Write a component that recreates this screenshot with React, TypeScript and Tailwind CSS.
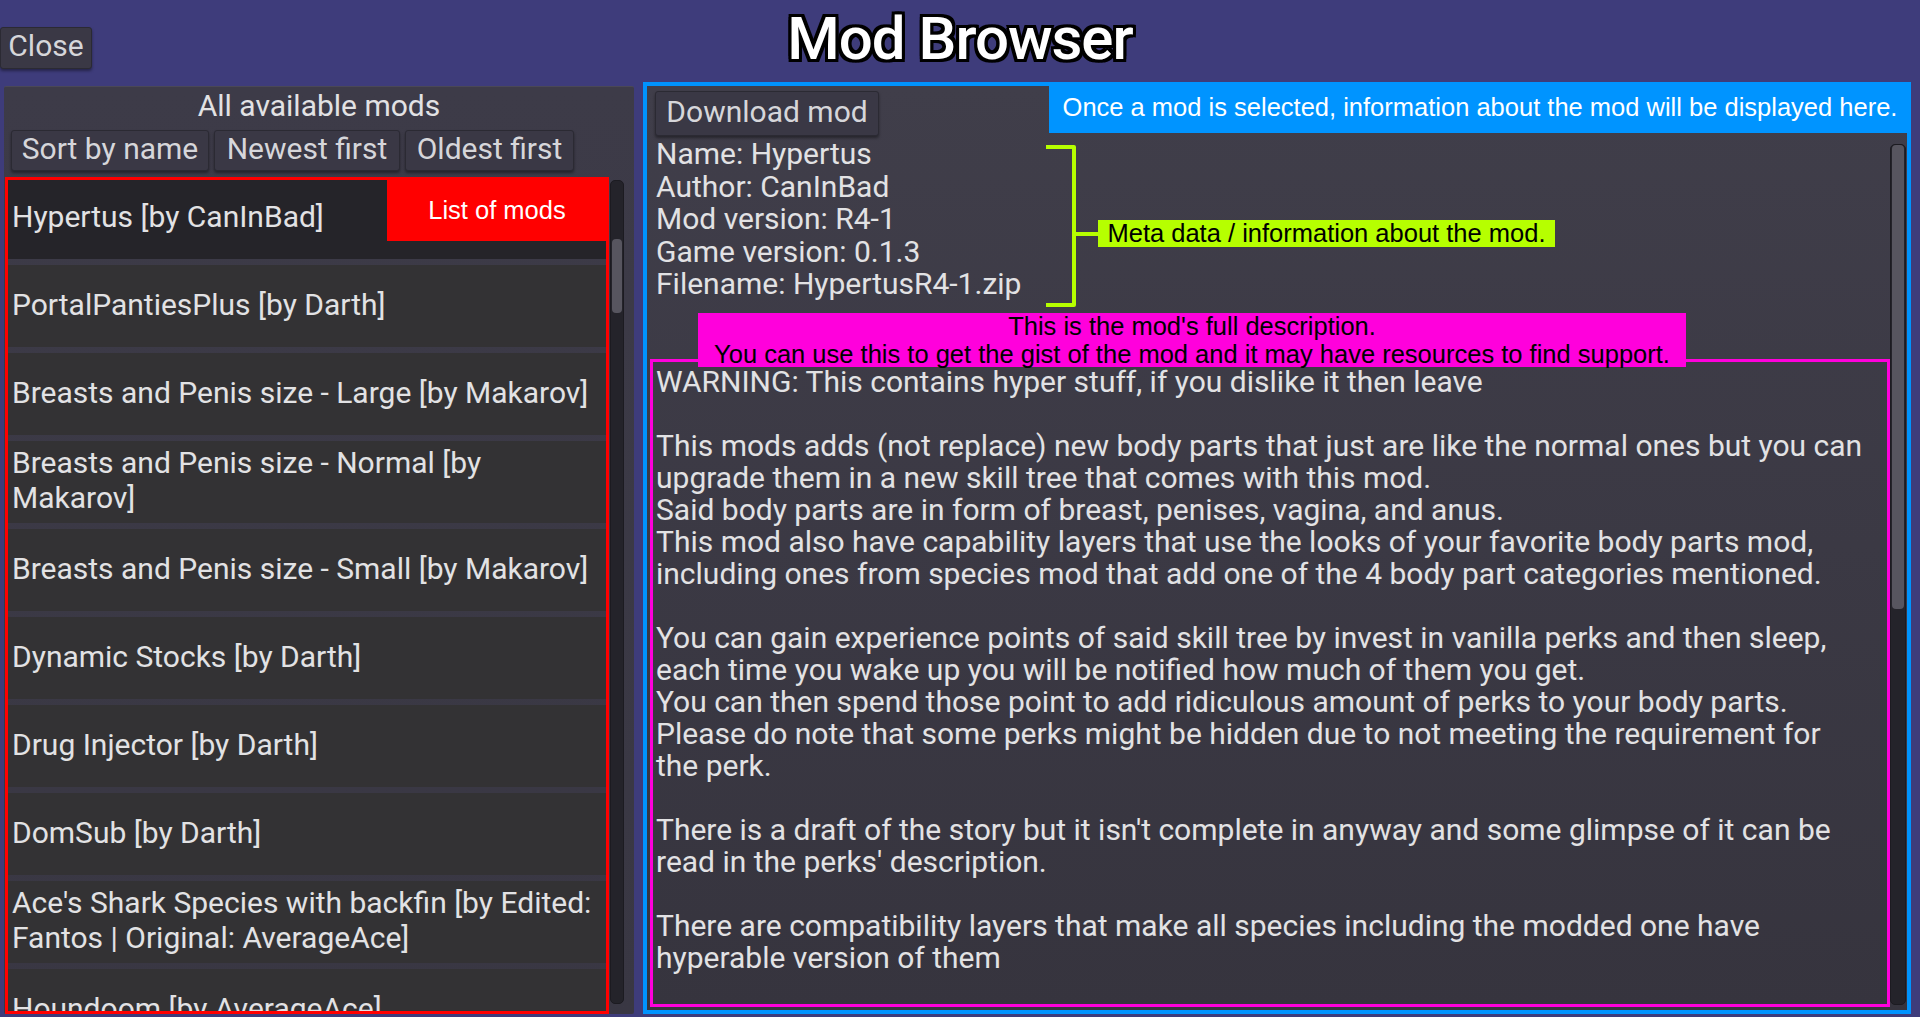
import React from 'react'

const mods = [
  'Hypertus [by CanInBad]',
  'PortalPantiesPlus [by Darth]',
  'Breasts and Penis size - Large [by Makarov]',
  'Breasts and Penis size - Normal [by\nMakarov]',
  'Breasts and Penis size - Small [by Makarov]',
  'Dynamic Stocks [by Darth]',
  'Drug Injector [by Darth]',
  'DomSub [by Darth]',
  "Ace's Shark Species with backfin [by Edited:\nFantos | Original: AverageAce]",
  'Houndoom [by AverageAce]',
]

const meta = [
  'Name: Hypertus',
  'Author: CanInBad',
  'Mod version: R4-1',
  'Game version: 0.1.3',
  'Filename: HypertusR4-1.zip',
]

const description = [
  'WARNING: This contains hyper stuff, if you dislike it then leave',
  '',
  'This mods adds (not replace) new body parts that just are like the normal ones but you can',
  'upgrade them in a new skill tree that comes with this mod.',
  'Said body parts are in form of breast, penises, vagina, and anus.',
  'This mod also have capability layers that use the looks of your favorite body parts mod,',
  'including ones from species mod that add one of the 4 body part categories mentioned.',
  '',
  'You can gain experience points of said skill tree by invest in vanilla perks and then sleep,',
  'each time you wake up you will be notified how much of them you get.',
  'You can then spend those point to add ridiculous amount of perks to your body parts.',
  'Please do note that some perks might be hidden due to not meeting the requirement for',
  'the perk.',
  '',
  "There is a draft of the story but it isn't complete in anyway and some glimpse of it can be",
  "read in the perks' description.",
  '',
  'There are compatibility layers that make all species including the modded one have',
  'hyperable version of them',
]

function GameButton({ label, className }: { label: string; className: string }) {
  return (
    <button
      className={
        'flex items-center justify-center pb-[4px] bg-[#3a3845] border border-[#2b2a33] rounded-[3px] shadow-[0_2px_3px_rgba(0,0,0,0.4)] text-[#d6d6da] text-[30px] leading-none ' +
        className
      }
    >
      {label}
    </button>
  )
}

function ScrollBar({ thumbTop, thumbHeight, className }: { thumbTop: number; thumbHeight: number; className: string }) {
  return (
    <div className={'relative bg-[#24232a] rounded-[5px] border border-[#1c1b21] ' + className}>
      <div
        className="absolute left-[1px] right-[1px] bg-[#57555f] rounded-[4px]"
        style={{ top: thumbTop, height: thumbHeight }}
      />
    </div>
  )
}

export default function App() {
  return (
    <div className="relative w-[1920px] h-[1017px] overflow-hidden bg-[#3e3c7b] font-['Roboto',sans-serif] text-[#e2e2e4]">
      {/* header */}
      <div className="grid grid-cols-[1fr_auto_1fr] h-[86px]">
        <div>
          <GameButton label="Close" className="mt-[27px] w-[92px] h-[42px]" />
        </div>
        <h1 className="mt-[9px] text-[60px] leading-[60px] font-medium tracking-[-1px] text-white [text-shadow:-3px_-3px_0_#000,3px_-3px_0_#000,-3px_3px_0_#000,3px_3px_0_#000,0_-3px_0_#000,0_3px_0_#000,-3px_0_0_#000,3px_0_0_#000]">
          Mod Browser
        </h1>
        <div />
      </div>

      <div className="flex items-start pl-[4px] gap-[13px]">
        {/* left panel */}
        <div className="flex flex-col w-[630px] h-[928px] bg-gradient-to-b from-[#3d3b48] to-[#393743] rounded-[2px] border-t border-[#4a4856]">
          <div className="pt-[3px] text-center text-[30px] leading-[32px]">All available mods</div>
          <div className="flex gap-[5px] pl-[7px] mt-[8px]">
            <GameButton label="Sort by name" className="w-[198px] h-[41px]" />
            <GameButton label="Newest first" className="w-[186px] h-[41px]" />
            <GameButton label="Oldest first" className="w-[169px] h-[41px]" />
          </div>
          <div className="flex flex-1 min-h-0 mt-[6px] pl-[1px] pr-[10px] gap-[1px]">
            <div className="flex-1 min-h-0 overflow-hidden border-[3px] border-[#ff0000]">
              <div className="flex flex-col gap-[6px] -mt-[3px]">
                {mods.map((m, i) => (
                  <div
                    key={m}
                    className={
                      'shrink-0 h-[82px] flex items-center pl-[4px] pb-[4px] whitespace-pre-line text-[30px] leading-[35px] ' +
                      (i === 0 ? 'bg-[#252429]' : 'bg-[#333234]')
                    }
                  >
                    {m}
                  </div>
                ))}
              </div>
            </div>
            <ScrollBar thumbTop={58} thumbHeight={74} className="w-[14px] mt-[3px] mb-[10px]" />
          </div>
        </div>

        {/* right panel */}
        <div className="flex flex-col w-[1260px] h-[924px] bg-gradient-to-b from-[#403e4a] to-[#36343e] outline-4 outline-[#0093fe]">
          <GameButton label="Download mod" className="ml-[8px] mt-[5px] w-[224px] h-[45px]" />
          <div className="flex flex-1 min-h-0 mt-[2px] pl-[3px] pr-[1px] pb-[3px]">
            <div className="flex flex-col flex-1 min-w-0">
              <div className="pl-[6px] text-[30px] leading-[32.5px]">
                {meta.map((l) => (
                  <div key={l}>{l}</div>
                ))}
              </div>
              <div className="mt-[58px] flex-1 border-[3px] border-[#ff00dc] pt-[4px] pl-[3px] overflow-hidden">
                {description.map((l, i) => (
                  <div key={i} className="h-[32px] text-[30px] leading-[32px] whitespace-pre">
                    {l}
                  </div>
                ))}
              </div>
            </div>
            <ScrollBar thumbTop={0} thumbHeight={464} className="w-[16px] mt-[6px] mb-[2px]" />
          </div>
        </div>
      </div>

      {/* annotation overlays */}
      <div className="absolute left-[387px] top-[180px] w-[220px] h-[61px] bg-[#ff0000] flex items-center justify-center font-['Liberation_Sans',sans-serif] text-[25.5px] text-white">
        List of mods
      </div>

      <div className="absolute left-[1049px] top-[82px] w-[862px] h-[51px] bg-[#0094ff] flex items-center justify-center font-['Liberation_Sans',sans-serif] text-[25.5px] text-white">
        Once a mod is selected, information about the mod will be displayed here.
      </div>

      <svg className="absolute left-[1044px] top-[144px]" width="56" height="164" viewBox="0 0 56 164">
        <path d="M2 3 H30 V161 H2 M30 90 H56" fill="none" stroke="#b6ff00" strokeWidth="4" strokeLinejoin="round" />
      </svg>

      <div className="absolute left-[1098px] top-[220px] w-[457px] h-[27px] bg-[#b6ff00] flex items-center justify-center font-['Liberation_Sans',sans-serif] text-[25.5px] leading-none text-black">
        Meta data / information about the mod.
      </div>

      <div className="absolute left-[698px] top-[313px] w-[988px] h-[54px] bg-[#ff00dc] flex flex-col items-center justify-center font-['Liberation_Sans',sans-serif] text-[25.5px] leading-[28px] text-black">
        <div>This is the mod's full description.</div>
        <div>You can use this to get the gist of the mod and it may have resources to find support.</div>
      </div>
    </div>
  )
}
